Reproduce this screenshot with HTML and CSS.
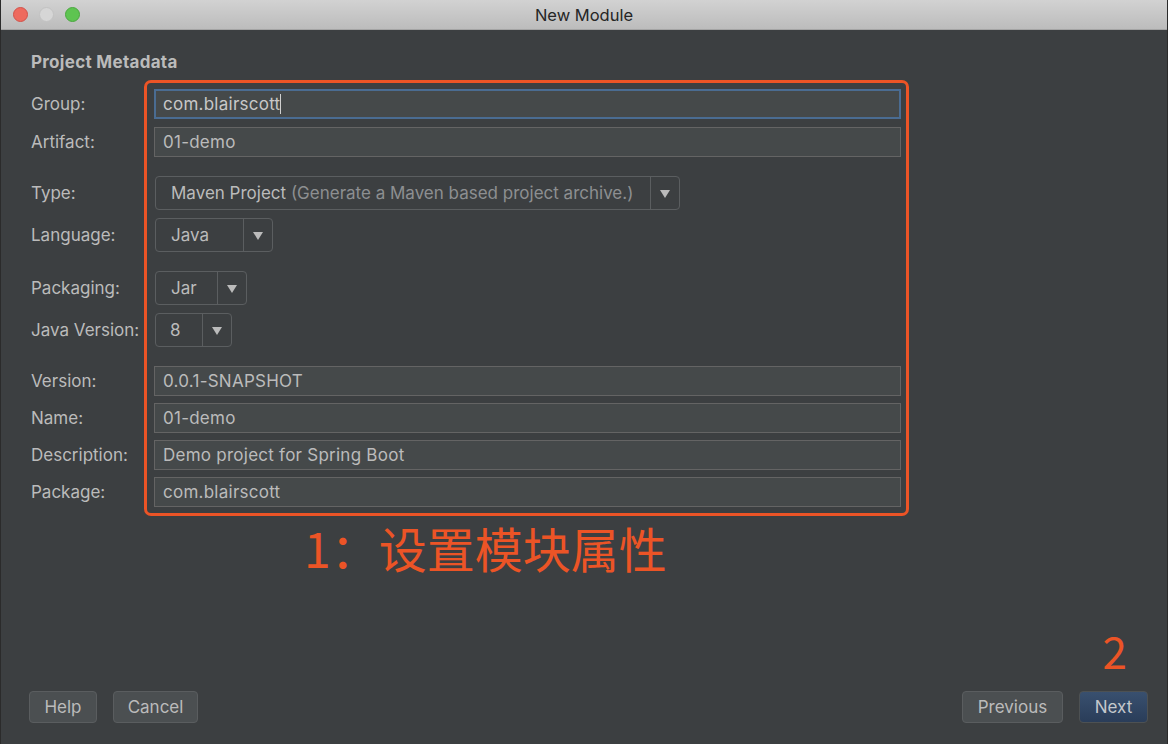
FILE: index.html
```html
<!DOCTYPE html>
<html lang="en">
<head>
    <meta charset="UTF-8">
    <title>New Module</title>
    <link rel="stylesheet" href="styles.css">
</head>
<body>
<div class="window">
    <div class="titlebar">
        <div class="lights">
            <span class="light red"></span>
            <span class="light gray"></span>
            <span class="light green"></span>
        </div>
        <div class="title">New Module</div>
    </div>

    <div class="content">
        <h1>Project Metadata</h1>

        <div class="form">
            <!-- 标注框 -->
            <div class="mark-box"></div>

            <div class="row first">
                <label>Group:</label>
                <div class="field focus">com.blairscott<span class="caret"></span></div>
            </div>
            <div class="row near">
                <label>Artifact:</label>
                <div class="field">01-demo</div>
            </div>
            <div class="row gap">
                <label>Type:</label>
                <div class="combo type">
                    <div class="combo-text">Maven Project <span class="hint">(Generate a Maven based project archive.)</span></div>
                    <div class="arrow"></div>
                </div>
            </div>
            <div class="row near">
                <label>Language:</label>
                <div class="combo lang">
                    <div class="combo-text">Java</div>
                    <div class="arrow"></div>
                </div>
            </div>
            <div class="row gap">
                <label>Packaging:</label>
                <div class="combo pack">
                    <div class="combo-text">Jar</div>
                    <div class="arrow"></div>
                </div>
            </div>
            <div class="row near">
                <label>Java Version:</label>
                <div class="combo ver">
                    <div class="combo-text">8</div>
                    <div class="arrow"></div>
                </div>
            </div>
            <div class="row gap">
                <label>Version:</label>
                <div class="field">0.0.1-SNAPSHOT</div>
            </div>
            <div class="row">
                <label>Name:</label>
                <div class="field">01-demo</div>
            </div>
            <div class="row">
                <label>Description:</label>
                <div class="field">Demo project for Spring Boot</div>
            </div>
            <div class="row">
                <label>Package:</label>
                <div class="field">com.blairscott</div>
            </div>
        </div>

        <div class="note-1">1：设置模块属性</div>
    </div>

    <div class="footer">
        <div class="btn-group">
            <button class="btn help">Help</button>
            <button class="btn cancel">Cancel</button>
        </div>
        <div class="btn-group right">
            <div class="note-2">2</div>
            <button class="btn prev">Previous</button>
            <button class="btn next">Next</button>
        </div>
    </div>
</div>
</body>
</html>
```

FILE: styles.css
```css
body {
    margin: 0;
    font-family: Inter, "Noto Sans", sans-serif;
    background-color: #3c3f41;
}

.window {
    width: 1168px;
    height: 744px;
    background-color: #3c3f41;
    display: flex;
    flex-direction: column;
    box-sizing: border-box;
    border-left: 1px solid #2b2b2b;
    border-right: 1px solid #2b2b2b;
    overflow: hidden;
}

.titlebar {
    height: 30px;
    flex-shrink: 0;
    background: linear-gradient(#d2d2d2, #bcbcbc);
    border-bottom: 1px solid #a4a4a4;
    display: flex;
    align-items: center;
    position: relative;
    box-sizing: border-box;
}

.lights {
    display: flex;
    gap: 11px;
    padding-left: 12px;
}

.light {
    width: 15px;
    height: 15px;
    border-radius: 50%;
    box-sizing: border-box;
}

.red {
    background-color: #ee6a5e;
    border: 1px solid #d2524a;
}

.gray {
    background-color: #d6d6d6;
    border: 1px solid #c2c2c2;
}

.green {
    background-color: #5ec451;
    border: 1px solid #4aa83f;
}

.title {
    position: absolute;
    left: 0;
    right: 0;
    text-align: center;
    font-size: 16.5px;
    color: #262626;
}

.content {
    flex: 1;
    padding-left: 30px;
    position: relative;
}

h1 {
    margin: 22px 0 0 0;
    font-size: 17px;
    font-weight: 700;
    letter-spacing: 0.3px;
    color: #bbbbbb;
    line-height: 20px;
}

.form {
    position: relative;
    margin-top: 17px;
    width: 870px;
}

.mark-box {
    position: absolute;
    left: 113px;
    top: -9px;
    width: 765px;
    height: 436px;
    border: 3px solid #ec5426;
    border-radius: 7px;
    box-sizing: border-box;
    pointer-events: none;
}

.row {
    display: flex;
    align-items: center;
    margin-top: 7px;
}

.row.first {
    margin-top: 0;
}

.row.near {
    margin-top: 8px;
}

.row.gap {
    margin-top: 19px;
}

label {
    width: 123px;
    flex-shrink: 0;
    font-size: 17px;
    color: #bbbbbb;
}

.field {
    width: 747px;
    height: 30px;
    box-sizing: border-box;
    background-color: #45494a;
    border: 1px solid #646464;
    color: #bbbbbb;
    font-size: 17px;
    letter-spacing: 0.25px;
    line-height: 28px;
    padding-left: 8px;
}

.field.focus {
    border: 2px solid #4a6c92;
    line-height: 26px;
    padding-left: 7px;
    color: #c8c8c8;
}

.caret {
    display: inline-block;
    width: 1px;
    height: 20px;
    background-color: #d0d0d0;
    vertical-align: -4px;
}

.combo {
    display: flex;
    height: 34px;
    box-sizing: border-box;
    border: 1px solid #5b5e60;
    border-radius: 4px;
    margin-left: 1px;
    color: #bbbbbb;
    font-size: 17px;
}

.combo-text {
    flex: 1;
    line-height: 32px;
    padding-left: 15px;
    border-right: 1px solid #5b5e60;
    white-space: nowrap;
}

.hint {
    color: #8d8f91;
}

.arrow {
    width: 28px;
    position: relative;
}

.arrow::after {
    content: "";
    position: absolute;
    left: 9px;
    top: 13px;
    border-left: 5px solid transparent;
    border-right: 5px solid transparent;
    border-top: 8px solid #bbbbbb;
}

.combo.type {
    width: 525px;
}

.combo.lang {
    width: 118px;
}

.combo.pack {
    width: 92px;
}

.combo.ver {
    width: 77px;
}

.combo.ver .combo-text {
    padding-left: 14px;
}

.note-1 {
    position: absolute;
    left: 303px;
    top: 488px;
    font-family: "Noto Sans CJK SC", sans-serif;
    font-size: 48px;
    line-height: 58px;
    color: #ec5426;
}

.footer {
    height: 53px;
    flex-shrink: 0;
    display: flex;
    justify-content: space-between;
    align-items: flex-start;
    padding: 0 19px 0 28px;
}

.btn-group {
    display: flex;
    gap: 16px;
    position: relative;
}

.btn {
    height: 32px;
    box-sizing: border-box;
    background-color: #4b4f51;
    border: 1px solid #5a5d5f;
    border-radius: 4px;
    color: #bbbbbb;
    font-family: Inter, "Noto Sans", sans-serif;
    font-size: 17px;
    padding: 0;
    cursor: pointer;
}

.btn.help {
    width: 68px;
}

.btn.cancel {
    width: 85px;
}

.btn.prev {
    width: 101px;
}

.btn.next {
    width: 69px;
    background: linear-gradient(#39506f, #2a3d59);
    border-color: #4d5153;
    color: #c4c8cc;
}

.note-2 {
    position: absolute;
    right: 21px;
    bottom: 48px;
    font-family: "Noto Sans CJK SC", sans-serif;
    font-size: 44px;
    line-height: 50px;
    color: #ec5426;
}
```
